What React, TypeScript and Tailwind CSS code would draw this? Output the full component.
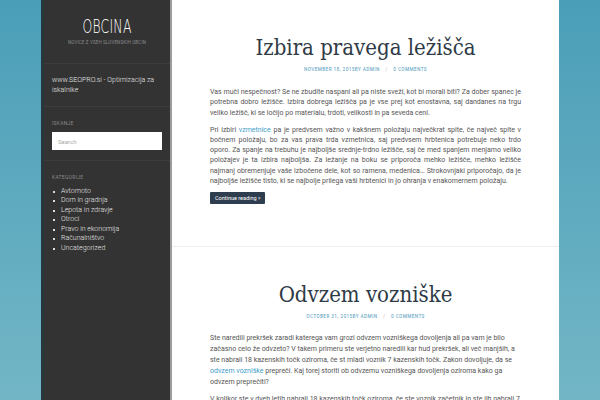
import React from "react";

const categories = [
  "Avtomoto",
  "Dom in gradnja",
  "Lepota in zdravje",
  "Otroci",
  "Pravo in ekonomija",
  "Računalništvo",
  "Uncategorized",
];

const body = { fontFamily: "Roboto, 'Liberation Sans', sans-serif" };
const slab = { fontFamily: "'DejaVu Serif Condensed', 'DejaVu Serif', serif" };

function Meta({ date }: { date: string }) {
  return (
    <div
      className="text-center text-[5.5px] tracking-[0.06em] uppercase text-[#5b9fc2]"
      style={{ fontFamily: "'Roboto Condensed', 'DejaVu Sans Condensed', sans-serif" }}
    >
      {date}BY ADMIN <span className="mx-1 text-[#bbb]">/</span> 0 COMMENTS
    </div>
  );
}

export default function App() {
  return (
    <div
      className="h-screen overflow-hidden flex bg-gradient-to-b from-[#4a9eb8] to-[#72b6c6]"
      style={body}
    >
      <div className="w-[41px] shrink-0" />

      {/* Sidebar */}
      <aside className="w-[129px] shrink-0 bg-[#333333] border-l-[3px] border-[#27373c]">
        <div className="pt-[14px] pb-[16px] text-center border-b border-[#3d3d3d]">
          <div
            className="text-[20px] leading-[24px] text-white font-extralight tracking-[0.02em] scale-x-[0.62]"
            style={{ fontFamily: "'DejaVu Sans', sans-serif" }}
          >
            OBCINA
          </div>
          <div className="mt-[2px] text-[4.5px] tracking-[0.03em] text-[#8a8a8a] uppercase">
            Novice z vseh slovenskih obcin
          </div>
        </div>
        <div className="px-[8px] py-[11px] border-b border-[#3d3d3d] text-[7px] leading-[10px] font-light text-[#e8e8e8]">
          www.SEOPRO.si - Optimizacija za iskalnike
        </div>
        <div className="px-[8px] pt-[13px] pb-[10px] border-b border-[#3d3d3d]">
          <div className="text-[5px] uppercase tracking-[0.05em] text-[#888]">Iskanje</div>
          <div className="mt-[5px] h-[18px] bg-white flex items-center px-[6px] text-[6px] text-[#aaa]">
            Search
          </div>
        </div>
        <div className="px-[8px] pt-[13px]">
          <div className="text-[5px] uppercase tracking-[0.05em] text-[#888]">Kategorije</div>
          <ul className="mt-[5px] text-[7px] leading-[9.5px] font-light text-[#e8e8e8]">
            {categories.map((c) => (
              <li key={c} className="flex items-center">
                <span className="w-[2px] h-[2px] bg-[#ddd] mr-[6px] ml-[1px]" />
                {c}
              </li>
            ))}
          </ul>
        </div>
      </aside>

      {/* Main */}
      <main className="w-[389px] shrink-0 bg-white border-l-2 border-[#9c9c9c] text-[#555]">
        <article className="pt-[33px] pb-[42px] px-[38px] border-b border-[#eee]">
          <h2 className="text-center text-[22px] leading-[30px] text-[#2f3b46]" style={slab}>
            Izbira pravega ležišča
          </h2>
          <div className="mt-[2px]">
            <Meta date="November 18, 2015" />
          </div>
          <div className="mt-[14px] text-[7px] leading-[10.2px] text-justify">
            <p>
              Vas muči nespečnost? Se ne zbudite naspani ali pa niste sveži, kot bi morali biti? Za dober spanec je
              potrebna dobro ležišče. Izbira dobrega ležišča pa je vse prej kot enostavna, saj dandanes na trgu
              veliko ležišč, ki se ločijo po materialu, trdoti, velikosti in pa seveda ceni.
            </p>
            <p className="mt-[7px]">
              Pri izbiri <span className="text-[#3ea0c8]">vzmetnice</span> pa je predvsem važno v kakšnem položaju
              največkrat spite, če največ spite v bočnem položaju, bo za vas prava trda vzmetnica, saj predvsem
              hrbtenica potrebuje neko trdo oporo. Za spanje na trebuhu je najboljše srednje-trdno ležišče, saj če
              med spanjem menjamo veliko položajev je ta izbira najboljša. Za ležanje na boku se priporoča mehko
              ležišče, mehko ležišče najmanj obremenjuje vaše izbočene dele, kot so ramena, medenica… Strokovnjaki
              priporočajo, da je najboljše ležišče tisto, ki se najbolje prilega vaši hrbtenici in jo ohranja v
              enakomernem položaju.
            </p>
            <div className="mt-[6px]">
              <span className="inline-block bg-[#2f3e4e] text-white text-[5.5px] leading-[12px] px-[5px] rounded-[1px]">
                Continue reading »
              </span>
            </div>
          </div>
        </article>

        <article className="pt-[33px] px-[38px]">
          <h2 className="text-center text-[22px] leading-[30px] text-[#2f3b46]" style={slab}>
            Odvzem vozniške
          </h2>
          <div className="mt-[2px]">
            <Meta date="October 31, 2015" />
          </div>
          <div className="mt-[13px] text-[7px] leading-[11px]">
            <p>
              Ste naredili prekršek zaradi katerega vam grozi odvzem vozniškega dovoljenja ali pa vam je bilo
              začasno celo že odvzeto? V takem primeru ste verjetno naredili kar hud prekršek, ali več manjših, a
              ste nabrali 18 kazenskih točk oziroma, če st mladi voznik 7 kazenskih točk. Zakon dovoljuje, da se{" "}
              <span className="text-[#3ea0c8]">odvzem vozniške</span> prepreči. Kaj torej storiti ob odvzemu
              vozniškega dovoljenja oziroma kako ga odvzem preprečiti?
            </p>
            <p className="mt-[6px]">
              V kolikor ste v dveh letih nabrali 18 kazenskih točk oziroma, če ste voznik začetnik in ste jih nabrali 7
            </p>
          </div>
        </article>
      </main>
    </div>
  );
}
